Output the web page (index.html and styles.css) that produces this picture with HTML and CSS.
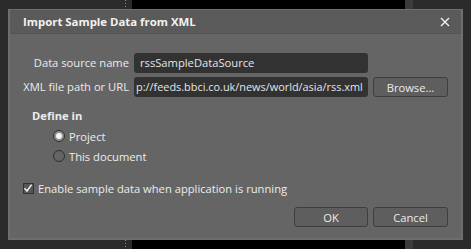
FILE: index.html
```html
<!DOCTYPE html>
<html lang="en">
<head>
    <meta charset="UTF-8">
    <title>Import Sample Data from XML</title>
    <link rel="stylesheet" href="styles.css">
</head>
<body>
    <!-- ダイアログ本体 -->
    <div class="dialog">
        <div class="titlebar">
            <span class="title">Import Sample Data from XML</span>
            <svg class="close" width="10" height="10" viewBox="0 0 10 10">
                <path d="M1 1 L9 9 M9 1 L1 9" stroke="#f0f0f0" stroke-width="1.4" fill="none"/>
            </svg>
        </div>
        <div class="content">
            <div class="form-grid">
                <label class="field-label">Data source name</label>
                <div class="text-field">rssSampleDataSource</div>
                <div></div>
                <label class="field-label">XML file path or URL</label>
                <div class="text-field url">p://feeds.bbci.co.uk/news/world/asia/rss.xml</div>
                <button class="btn">Browse...</button>
            </div>

            <div class="group-title">Define in</div>
            <div class="radio-row"><span class="radio checked"></span>Project</div>
            <div class="radio-row"><span class="radio"></span>This document</div>

            <div class="check-row">
                <span class="checkbox">
                    <svg width="10" height="10" viewBox="0 0 10 10">
                        <path d="M1.5 5.2 L4 8 L8.6 1.6" stroke="#f2f2f2" stroke-width="1.5" fill="none"/>
                    </svg>
                </span>
                Enable sample data when application is running
            </div>

            <div class="buttons">
                <button class="btn ok">OK</button>
                <button class="btn">Cancel</button>
            </div>
        </div>
    </div>
</body>
</html>
```

FILE: styles.css
```css
* {
    box-sizing: border-box;
}
html, body {
    margin: 0;
    height: 100%;
}
body {
    padding: 9px 8px;
    font-family: 'Open Sans', 'Liberation Sans', sans-serif;
    font-size: 11.2px;
    color: #ececec;
    background:
        repeating-linear-gradient(to bottom, #6f8fc0 0 1px, transparent 1px 3px) 125px 0 / 1px 100% no-repeat,
        linear-gradient(to right, #2b2b2b 0 132px, #000 132px 405px, #3b3b3b 405px 413px, #2b2b2b 413px);
}
.dialog {
    width: 455px;
    height: 231px;
    background: #656565;
    border: 2px solid #6e6e6e;
    border-top-width: 1px;
    display: flex;
    flex-direction: column;
}
.titlebar {
    height: 24px;
    background: #5a5a5a;
    border-bottom: 1px solid #545454;
    display: flex;
    align-items: center;
    justify-content: space-between;
    padding: 0 11px 0 13px;
}
.title {
    font-weight: bold;
    font-size: 11.4px;
    color: #f2f2f2;
}
.content {
    flex: 1;
    padding: 19px 0 11px 0;
}
.form-grid {
    display: grid;
    grid-template-columns: 119px 234px 75px;
    grid-auto-rows: 20px;
    column-gap: 5px;
    row-gap: 4px;
}
.field-label {
    text-align: right;
    line-height: 20px;
    white-space: nowrap;
}
.text-field {
    background: #323232;
    border-radius: 3px;
    padding: 0 6px;
    line-height: 20px;
    white-space: nowrap;
    overflow: hidden;
    color: #e6e6e6;
}
.text-field.url {
    padding: 0 2px;
    font-size: 10.9px;
}
.btn {
    font-family: inherit;
    font-size: 11.2px;
    color: #ececec;
    background: #5e5e5e;
    border: 1px solid #3e3e3e;
    border-radius: 3px;
    padding: 0;
    height: 20px;
    width: 75px;
}
.group-title {
    font-weight: bold;
    line-height: 20px;
    margin-top: 9px;
    padding-left: 22px;
}
.radio-row {
    display: flex;
    align-items: center;
    height: 20px;
    padding-left: 43px;
}
.radio {
    width: 12px;
    height: 12px;
    border-radius: 50%;
    border: 1px solid #2f2f2f;
    margin-right: 4px;
    display: flex;
    align-items: center;
    justify-content: center;
}
.radio.checked {
    background: #8e8e8e;
}
.radio.checked::after {
    content: '';
    width: 6px;
    height: 6px;
    border-radius: 50%;
    background: #f4f4f4;
}
.check-row {
    display: flex;
    align-items: center;
    height: 20px;
    margin-top: 12px;
    padding-left: 13px;
}
.checkbox {
    width: 11px;
    height: 11px;
    border: 1px solid #333;
    background: #555;
    margin-right: 4px;
    display: flex;
}
.checkbox svg {
    margin: -1px 0 0 -1px;
}
.buttons {
    display: flex;
    justify-content: flex-end;
    gap: 5px;
    margin-top: 9px;
    padding-right: 13px;
}
.btn.ok {
    width: 74px;
}
```
